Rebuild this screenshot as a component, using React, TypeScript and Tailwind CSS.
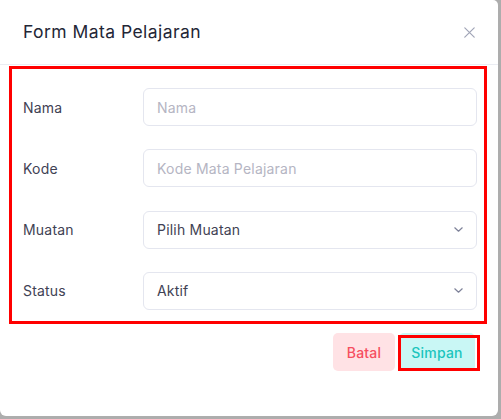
import React from "react";

const font = { fontFamily: "Inter, 'Noto Sans', sans-serif" };

function Chevron() {
  return (
    <svg width="9" height="5" viewBox="0 0 9 5" fill="none" className="shrink-0">
      <path d="M0.8 0.8l3.7 3.4 3.7-3.4" stroke="#7e8299" strokeWidth="1.2" strokeLinecap="round" strokeLinejoin="round" />
    </svg>
  );
}

function Row({ label, children }: { label: string; children: React.ReactNode }) {
  return (
    <div className="flex items-center">
      <div className="w-[120px] shrink-0 text-[14px] text-[#3f4254] tracking-[0.2px]">{label}</div>
      <div className="flex-1">{children}</div>
    </div>
  );
}

export default function App() {
  return (
    <div className="w-[501px] h-[419px] bg-[#adadad] overflow-hidden" style={font}>
      <div className="w-[498px] h-[416px] bg-white rounded-tr-[5px] rounded-b-[6px] flex flex-col">
        <div className="h-[65px] shrink-0 flex items-center justify-between pl-[23px] pr-[23px] border-b border-[#ebedf3]">
          <div className="text-[17.5px] font-normal text-[#232636] tracking-[0.45px]">Form Mata Pelajaran</div>
          <svg width="11" height="11" viewBox="0 0 11 11" fill="none">
            <path d="M0.8 0.8l9.4 9.4M10.2 0.8L0.8 10.2" stroke="#a1a5b7" strokeWidth="1.2" strokeLinecap="round" />
          </svg>
        </div>
        <div className="ml-[9px] mr-[11px] mt-px h-[258px] border-[3px] border-[#ff0000] pl-[11px] pr-[7px] pt-[19px] flex flex-col gap-[23.3px]">
          <Row label="Nama">
            <div className="h-[38px] rounded-[6px] border border-[#e4e6ef] flex items-center px-[13px] text-[14px] tracking-[0.2px] text-[#b5b5c3]">Nama</div>
          </Row>
          <Row label="Kode">
            <div className="h-[38px] rounded-[6px] border border-[#e4e6ef] flex items-center px-[13px] text-[14px] tracking-[0.2px] text-[#b5b5c3]">Kode Mata Pelajaran</div>
          </Row>
          <Row label="Muatan">
            <div className="h-[38px] rounded-[6px] border border-[#e4e6ef] flex items-center justify-between pl-[13px] pr-[13px] text-[14px] tracking-[0.2px] text-[#3f4254]">
              <span>Pilih Muatan</span>
              <Chevron />
            </div>
          </Row>
          <Row label="Status">
            <div className="h-[38px] rounded-[6px] border border-[#e4e6ef] flex items-center justify-between pl-[13px] pr-[13px] text-[14px] tracking-[0.2px] text-[#3f4254]">
              <span>Aktif</span>
              <Chevron />
            </div>
          </Row>
        </div>
        <div className="flex justify-end gap-[4px] pr-[23px] mt-[9px]">
          <button className="w-[62px] h-[38px] rounded-[5px] bg-[#ffe2e5] text-[#f64e60] text-[14px] tracking-[0.2px] font-medium">Batal</button>
          <div className="relative">
            <button className="w-[76px] h-[38px] rounded-[5px] bg-[#c9f7f5] text-[#1bc5bd] text-[14px] tracking-[0.2px] font-medium">Simpan</button>
            <div className="absolute left-[-1px] top-[2px] w-[82px] h-[36px] border-[3px] border-[#ff0000] pointer-events-none" />
          </div>
        </div>
      </div>
    </div>
  );
}
